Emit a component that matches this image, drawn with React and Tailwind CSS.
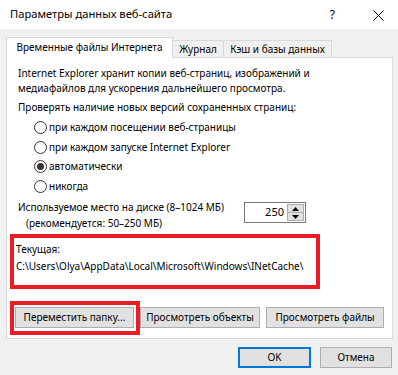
import React from 'react';

const radios = [
  { label: 'при каждом посещении веб-страницы', checked: false },
  { label: 'при каждом запуске Internet Explorer', checked: false },
  { label: 'автоматически', checked: true },
  { label: 'никогда', checked: false },
];

const Radio = ({ checked }) => (
  <span className="w-[13px] h-[13px] rounded-full border border-[#333333] bg-white flex items-center justify-center shrink-0">
    {checked && <span className="w-[7px] h-[7px] rounded-full bg-[#3a3030]" />}
  </span>
);

const Button = ({ children, className = '' }) => (
  <div className={`h-[21px] bg-[#e1e1e1] border border-[#adadad] flex items-center justify-center whitespace-nowrap ${className}`}>
    {children}
  </div>
);

export default function App() {
  return (
    <div className="w-[398px] h-[375px] bg-[#f0f0f0] overflow-hidden text-[10px] text-black font-['Noto_Sans',sans-serif]">
      {/* Title bar */}
      <div className="h-[29px] bg-white flex items-center pl-[10px] pr-[14px]">
        <span className="text-[11.2px] flex-1">Параметры данных веб-сайта</span>
        <span className="mr-[38px] text-[12px]">?</span>
        <svg width="11" height="11" viewBox="0 0 11 11" className="mt-[1px]">
          <path d="M0.5 0.5 L10.5 10.5 M10.5 0.5 L0.5 10.5" stroke="#000" strokeWidth="1" />
        </svg>
      </div>

      {/* Tabs */}
      <div className="mt-[8px] ml-[6px] h-[21px] flex items-end">
        <div className="relative z-10 w-[167px] h-[21px] bg-white border-t border-l border-r border-[#d9d9d9] flex items-center justify-center pb-[2px]">
          Временные файлы Интернета
        </div>
        <div className="-ml-px mb-[1px] w-[52px] h-[17px] bg-[#f0f0f0] border-t border-l border-r border-[#d9d9d9] flex items-center justify-center">
          Журнал
        </div>
        <div className="-ml-px mb-[1px] w-[109px] h-[17px] bg-[#f0f0f0] border-t border-l border-r border-[#d9d9d9] flex items-center justify-center">
          Кэш и базы данных
        </div>
      </div>

      {/* Panel */}
      <div className="-mt-px ml-[6px] w-[387px] h-[282px] bg-white border border-[#d9d9d9] flex flex-col">
        <div className="pt-[8px] pl-[11px] leading-[15px] whitespace-nowrap">
          <div>Internet Explorer хранит копии веб-страниц, изображений и</div>
          <div>медиафайлов для ускорения дальнейшего просмотра.</div>
          <div className="mt-[4px]">Проверять наличие новых версий сохраненных страниц:</div>
        </div>

        <div className="mt-[3px] pl-[27px] flex flex-col">
          {radios.map((r, i) => (
            <div key={i} className="h-[19.5px] flex items-center gap-[2px] whitespace-nowrap">
              <Radio checked={r.checked} />
              <span>{r.label}</span>
            </div>
          ))}
        </div>

        {/* Disk space */}
        <div className="mt-[3px] pl-[11px] flex items-start">
          <div className="w-[226px] leading-[16px] whitespace-nowrap">
            <div>Используемое место на диске (8–1024 МБ)</div>
            <div className="pl-[8px]">(рекомендуется: 50–250 МБ)</div>
          </div>
          <div className="mt-[3px] w-[62px] h-[21px] border border-[#7a7a7a] bg-white flex items-center">
            <span className="flex-1 text-right pr-[3px] text-[11px]">250</span>
            <div className="w-[17px] h-[17px] mr-[1px] flex flex-col border border-[#adadad]">
              <div className="flex-1 bg-[#e1e1e1] border-b border-[#adadad] flex items-center justify-center">
                <svg width="7" height="4" viewBox="0 0 7 4"><path d="M0 4 L3.5 0 L7 4 Z" fill="#000" /></svg>
              </div>
              <div className="flex-1 bg-[#e1e1e1] flex items-center justify-center">
                <svg width="7" height="4" viewBox="0 0 7 4"><path d="M0 0 L3.5 4 L7 0 Z" fill="#000" /></svg>
              </div>
            </div>
          </div>
        </div>

        {/* Current folder (highlighted) */}
        <div className="mt-[3px] ml-[3px] w-[310px] h-[55px] border-[4px] border-[#ed1c24] pt-[3px] pl-[2px] leading-[17px] whitespace-nowrap">
          <div>Текущая:</div>
          <div>C:\Users\Olya\AppData\Local\Microsoft\Windows\INetCache\</div>
        </div>

        {/* Buttons */}
        <div className="mt-[18px] ml-[8px] flex">
          <div className="relative">
            <Button className="w-[119px]">Переместить папку...</Button>
            <div className="absolute -left-[5px] -top-[6px] -right-[6px] -bottom-[7px] border-[4px] border-[#ed1c24] pointer-events-none" />
          </div>
          <Button className="ml-[6px] w-[120px]">Просмотреть объекты</Button>
          <Button className="ml-[6px] w-[118px]">Просмотреть файлы</Button>
        </div>
      </div>

      {/* Footer */}
      <div className="mt-[8px] pr-[6px] flex justify-end gap-[9px]">
        <div className="w-[73px] h-[21px] bg-[#e1e1e1] border-2 border-[#0078d7] flex items-center justify-center">OK</div>
        <Button className="w-[72px]">Отмена</Button>
      </div>
    </div>
  );
}
